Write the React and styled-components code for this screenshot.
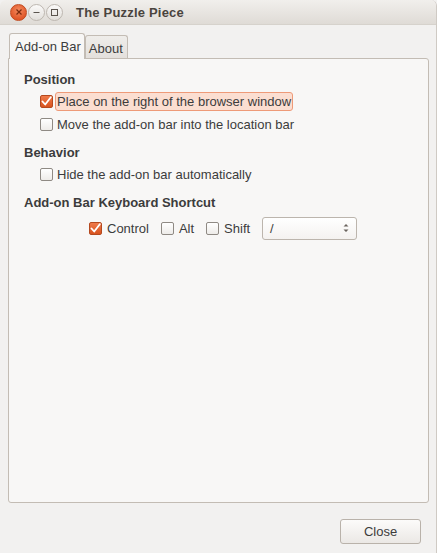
import React from "react"
import styled, { createGlobalStyle } from "styled-components"

const Global = createGlobalStyle`
  html, body {
    margin: 0;
    padding: 0;
    background: #f2f1f0;
  }
  body {
    font-family: "Liberation Sans", Arial, sans-serif;
    font-size: 13px;
    color: #3c3c3c;
  }
`

const Window = styled.div`
  width: 437px;
  height: 553px;
  box-sizing: border-box;
  background: #f2f1f0;
  border-right: 1px solid #cfcac4;
  border-radius: 6px 6px 0 0;
  display: flex;
  flex-direction: column;
  overflow: hidden;
`

const TitleBar = styled.div`
  height: 24px;
  flex: none;
  display: flex;
  align-items: center;
  padding-left: 10px;
  background: linear-gradient(#f1efec, #dfdbd6);
  border-bottom: 1px solid #d6d2cc;
`

const WinButton = styled.div`
  width: 17px;
  height: 17px;
  flex: none;
  border-radius: 50%;
  box-sizing: border-box;
  margin-right: 1px;
  display: flex;
  align-items: center;
  justify-content: center;
  background: ${p =>
    p.close
      ? "radial-gradient(circle at 50% 35%, #f48a5e, #e0582a 70%)"
      : "linear-gradient(#fbfaf9, #e2dfdb)"};
  border: 1px solid ${p => (p.close ? "#c04a20" : "#bdb7b0")};
`

const Title = styled.div`
  margin-left: 12px;
  font-weight: bold;
  font-size: 13px;
  color: #4a443e;
  letter-spacing: 0.2px;
`

const Body = styled.div`
  flex: 1;
  display: flex;
  flex-direction: column;
  padding: 7px 8px 0 8px;
`

const Tabs = styled.div`
  display: flex;
  align-items: flex-end;
  padding-left: 1px;
  height: 26px;
`

const Tab = styled.div`
  box-sizing: border-box;
  height: ${p => (p.active ? "26px" : "23px")};
  padding: ${p => (p.active ? "0 3px 0 5px" : "3px 4px 0 3px")};
  display: flex;
  align-items: center;
  font-size: 13px;
  color: #3c3c3c;
  border: 1px solid #c3bcb4;
  border-bottom: none;
  border-radius: 3px 3px 0 0;
  background: ${p => (p.active ? "#f8f7f6" : "linear-gradient(#efedea, #e4e0dc)")};
  margin-bottom: ${p => (p.active ? "-1px" : "0")};
  position: relative;
  z-index: ${p => (p.active ? 2 : 1)};
`

const Panel = styled.div`
  box-sizing: border-box;
  width: 421px;
  height: 445px;
  border: 1px solid #c3bcb4;
  border-radius: 0 3px 3px 3px;
  background: #f8f7f6;
  padding: 13px 15px;
  display: flex;
  flex-direction: column;
`

const Heading = styled.div`
  font-weight: bold;
  font-size: 13px;
  color: #3c3c3c;
  height: 16px;
  line-height: 16px;
  margin-top: ${p => (p.first ? "0" : "9px")};
  margin-bottom: 2px;
`

const Row = styled.label`
  display: flex;
  align-items: center;
  height: 23px;
  padding-left: 16px;
`

const Box = styled.span`
  box-sizing: border-box;
  width: 13px;
  height: 13px;
  border-radius: 2px;
  flex: none;
  display: flex;
  align-items: center;
  justify-content: center;
  border: 1px solid ${p => (p.checked ? "#b4491f" : "#8f8a84")};
  background: ${p =>
    p.checked ? "linear-gradient(#ef7a4a, #d8531f)" : "linear-gradient(#ffffff, #eeece9)"};
`

const Label = styled.span`
  margin-left: ${p => (p.inline ? "3px" : "2px")};
  padding: 0 1px;
  line-height: 17px;
  border-radius: 3px;
  border: 1px solid ${p => (p.focus ? "#ee9a78" : "transparent")};
  background: ${p => (p.focus ? "#fbded1" : "transparent")};
`

const ShortcutRow = styled.div`
  display: flex;
  align-items: center;
  padding-left: 65px;
  margin-top: 3px;
  height: 24px;
`

const Inline = styled.label`
  display: flex;
  align-items: center;
  margin-right: 10px;
`

const Combo = styled.div`
  box-sizing: border-box;
  width: 95px;
  height: 23px;
  border: 1px solid #bcb5ad;
  border-radius: 3px;
  background: linear-gradient(#ffffff, #f4f2f0);
  display: flex;
  align-items: center;
  justify-content: space-between;
  padding: 0 6px 0 7px;
`

const Footer = styled.div`
  flex: none;
  display: flex;
  justify-content: flex-end;
  padding: 16px 7px 0 0;
`

const Button = styled.button`
  box-sizing: border-box;
  width: 81px;
  height: 25px;
  border: 1px solid #b9b2aa;
  border-radius: 3px;
  background: linear-gradient(#fcfbfa, #ebe8e5);
  font-family: "Liberation Sans", Arial, sans-serif;
  font-size: 13px;
  color: #3c3c3c;
`

const Check = ({ checked }) => (
  <Box checked={checked}>
    {checked && (
      <svg width="11" height="11" viewBox="0 0 11 11">
        <path d="M1.5 5.5 L4.2 8.5 L9.8 1.2" stroke="#fff" strokeWidth="1.8" fill="none" strokeLinecap="round" strokeLinejoin="round" />
      </svg>
    )}
  </Box>
)

export default function App() {
  return (
    <Window>
      <Global />
      <TitleBar>
        <WinButton close>
          <svg width="8" height="8" viewBox="0 0 8 8">
            <path d="M1.5 1.5 L6.5 6.5 M6.5 1.5 L1.5 6.5" stroke="#7a2a0e" strokeWidth="1.2" />
          </svg>
        </WinButton>
        <WinButton>
          <svg width="9" height="9" viewBox="0 0 9 9">
            <path d="M1.5 4.5 H7.5" stroke="#5a544e" strokeWidth="1" />
          </svg>
        </WinButton>
        <WinButton>
          <svg width="9" height="9" viewBox="0 0 9 9">
            <rect x="1.5" y="1.5" width="6" height="6" stroke="#5a544e" strokeWidth="1" fill="none" />
          </svg>
        </WinButton>
        <Title>The Puzzle Piece</Title>
      </TitleBar>
      <Body>
        <Tabs>
          <Tab active>Add-on Bar</Tab>
          <Tab>About</Tab>
        </Tabs>
        <Panel>
          <Heading first>Position</Heading>
          <Row>
            <Check checked />
            <Label focus>Place on the right of the browser window</Label>
          </Row>
          <Row>
            <Check />
            <Label>Move the add-on bar into the location bar</Label>
          </Row>
          <Heading>Behavior</Heading>
          <Row>
            <Check />
            <Label>Hide the add-on bar automatically</Label>
          </Row>
          <Heading>Add-on Bar Keyboard Shortcut</Heading>
          <ShortcutRow>
            <Inline>
              <Check checked />
              <Label inline>Control</Label>
            </Inline>
            <Inline>
              <Check />
              <Label inline>Alt</Label>
            </Inline>
            <Inline>
              <Check />
              <Label inline>Shift</Label>
            </Inline>
            <Combo>
              <span>/</span>
              <svg width="8" height="12" viewBox="0 0 8 12">
                <path d="M1.5 4.5 L4 2 L6.5 4.5 Z M1.5 7.5 L4 10 L6.5 7.5 Z" fill="#6a645e" />
              </svg>
            </Combo>
          </ShortcutRow>
        </Panel>
        <Footer>
          <Button>Close</Button>
        </Footer>
      </Body>
    </Window>
  )
}
